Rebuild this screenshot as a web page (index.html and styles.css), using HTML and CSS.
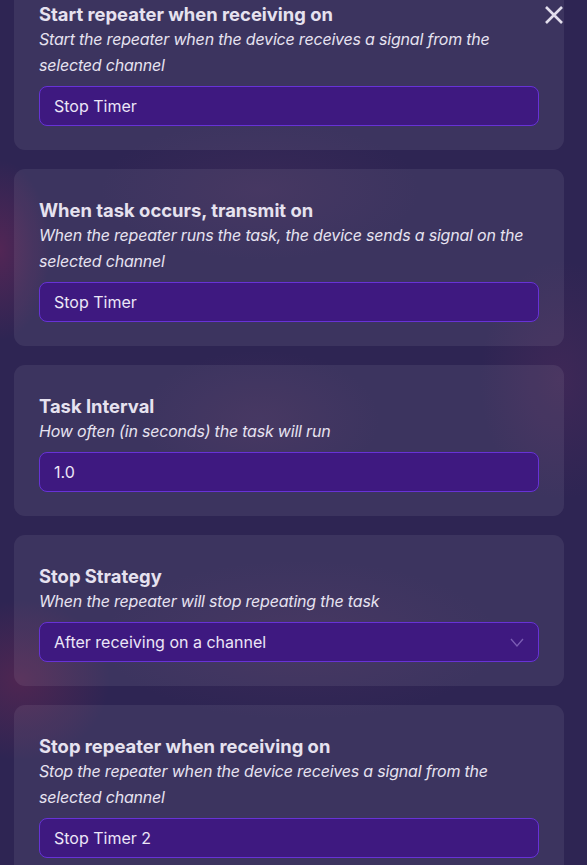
FILE: index.html
```html
<!DOCTYPE html>
<html lang="en">
<head>
<meta charset="utf-8">
<title>Repeater settings</title>
<link rel="stylesheet" href="styles.css">
</head>
<body>
<div class="backdrop">
  <div class="list">
    <section class="card">
      <h2 class="title">Start repeater when receiving on</h2>
      <p class="desc">Start the repeater when the device receives a signal from the selected channel</p>
      <div class="field">Stop Timer</div>
    </section>
    <section class="card">
      <h2 class="title">When task occurs, transmit on</h2>
      <p class="desc">When the repeater runs the task, the device sends a signal on the selected channel</p>
      <div class="field">Stop Timer</div>
    </section>
    <section class="card">
      <h2 class="title">Task Interval</h2>
      <p class="desc">How often (in seconds) the task will run</p>
      <div class="field">1.0</div>
    </section>
    <section class="card">
      <h2 class="title">Stop Strategy</h2>
      <p class="desc">When the repeater will stop repeating the task</p>
      <div class="field select">
        <span>After receiving on a channel</span>
        <svg class="chevron" width="14" height="9" viewBox="0 0 14 9"><path d="M1 1 L7 8 L13 1" fill="none" stroke="#7b5db3" stroke-width="1.3"/></svg>
      </div>
    </section>
    <section class="card">
      <h2 class="title">Stop repeater when receiving on</h2>
      <p class="desc">Stop the repeater when the device receives a signal from the selected channel</p>
      <div class="field">Stop Timer 2</div>
    </section>
  </div>
  <button class="close" aria-label="Close">
    <svg width="20" height="20" viewBox="0 0 20 20"><path d="M2 2 L18 18 M18 2 L2 18" stroke="#e2deec" stroke-width="2.6" stroke-linecap="butt"/></svg>
  </button>
</div>
</body>
</html>
```
FILE: styles.css
```css
html, body {
  margin: 0;
  padding: 0;
  height: 100%;
  overflow: hidden;
}
body {
  font-family: Inter, "Noto Sans", sans-serif;
  background-color: #2e2553;
  background-image:
    radial-gradient(ellipse 50px 90px at 0px 250px, rgba(150, 40, 90, 0.35), rgba(150, 40, 90, 0) 100%),
    radial-gradient(ellipse 90px 80px at 20px 680px, rgba(140, 40, 80, 0.35), rgba(140, 40, 80, 0) 100%),
    radial-gradient(ellipse 80px 120px at 560px 380px, rgba(120, 50, 100, 0.22), rgba(120, 50, 100, 0) 100%),
    radial-gradient(ellipse 120px 70px at 260px 420px, rgba(110, 60, 110, 0.18), rgba(110, 60, 110, 0) 100%),
    radial-gradient(ellipse 200px 80px at 300px 640px, rgba(110, 60, 110, 0.18), rgba(110, 60, 110, 0) 100%),
    radial-gradient(ellipse 160px 70px at 260px 190px, rgba(110, 60, 110, 0.16), rgba(110, 60, 110, 0) 100%);
}
.backdrop {
  position: relative;
  height: 100%;
}
.list {
  display: flex;
  flex-direction: column;
  gap: 19px;
  width: 550px;
  margin: -27px 0 0 14px;
}
.card {
  background: rgba(255, 255, 255, 0.07);
  border-radius: 11px;
  padding: 27px 25px 24px;
  display: flex;
  flex-direction: column;
}
.title {
  margin: 0;
  font-size: 18.4px;
  line-height: 26px;
  font-weight: 700;
  color: #e6e2ef;
  padding-top: 1px;
  margin-bottom: -1px;
}
.desc {
  margin: 0 0 8px;
  font-size: 16px;
  line-height: 26px;
  font-style: italic;
  color: #e6e2f0;
  letter-spacing: -0.2px;
}
.field {
  box-sizing: border-box;
  height: 40px;
  display: flex;
  align-items: center;
  justify-content: space-between;
  padding: 0 14px 0 14px;
  background: #3e1980;
  border: 1px solid #6732d6;
  border-radius: 8px;
  font-size: 16px;
  color: #ece6f7;
}
.chevron {
  display: block;
}
.close {
  position: absolute;
  top: 32px;
  left: 544px;
  width: 20px;
  height: 20px;
  padding: 0;
  border: 0;
  background: none;
}
.close svg {
  display: block;
}
```
